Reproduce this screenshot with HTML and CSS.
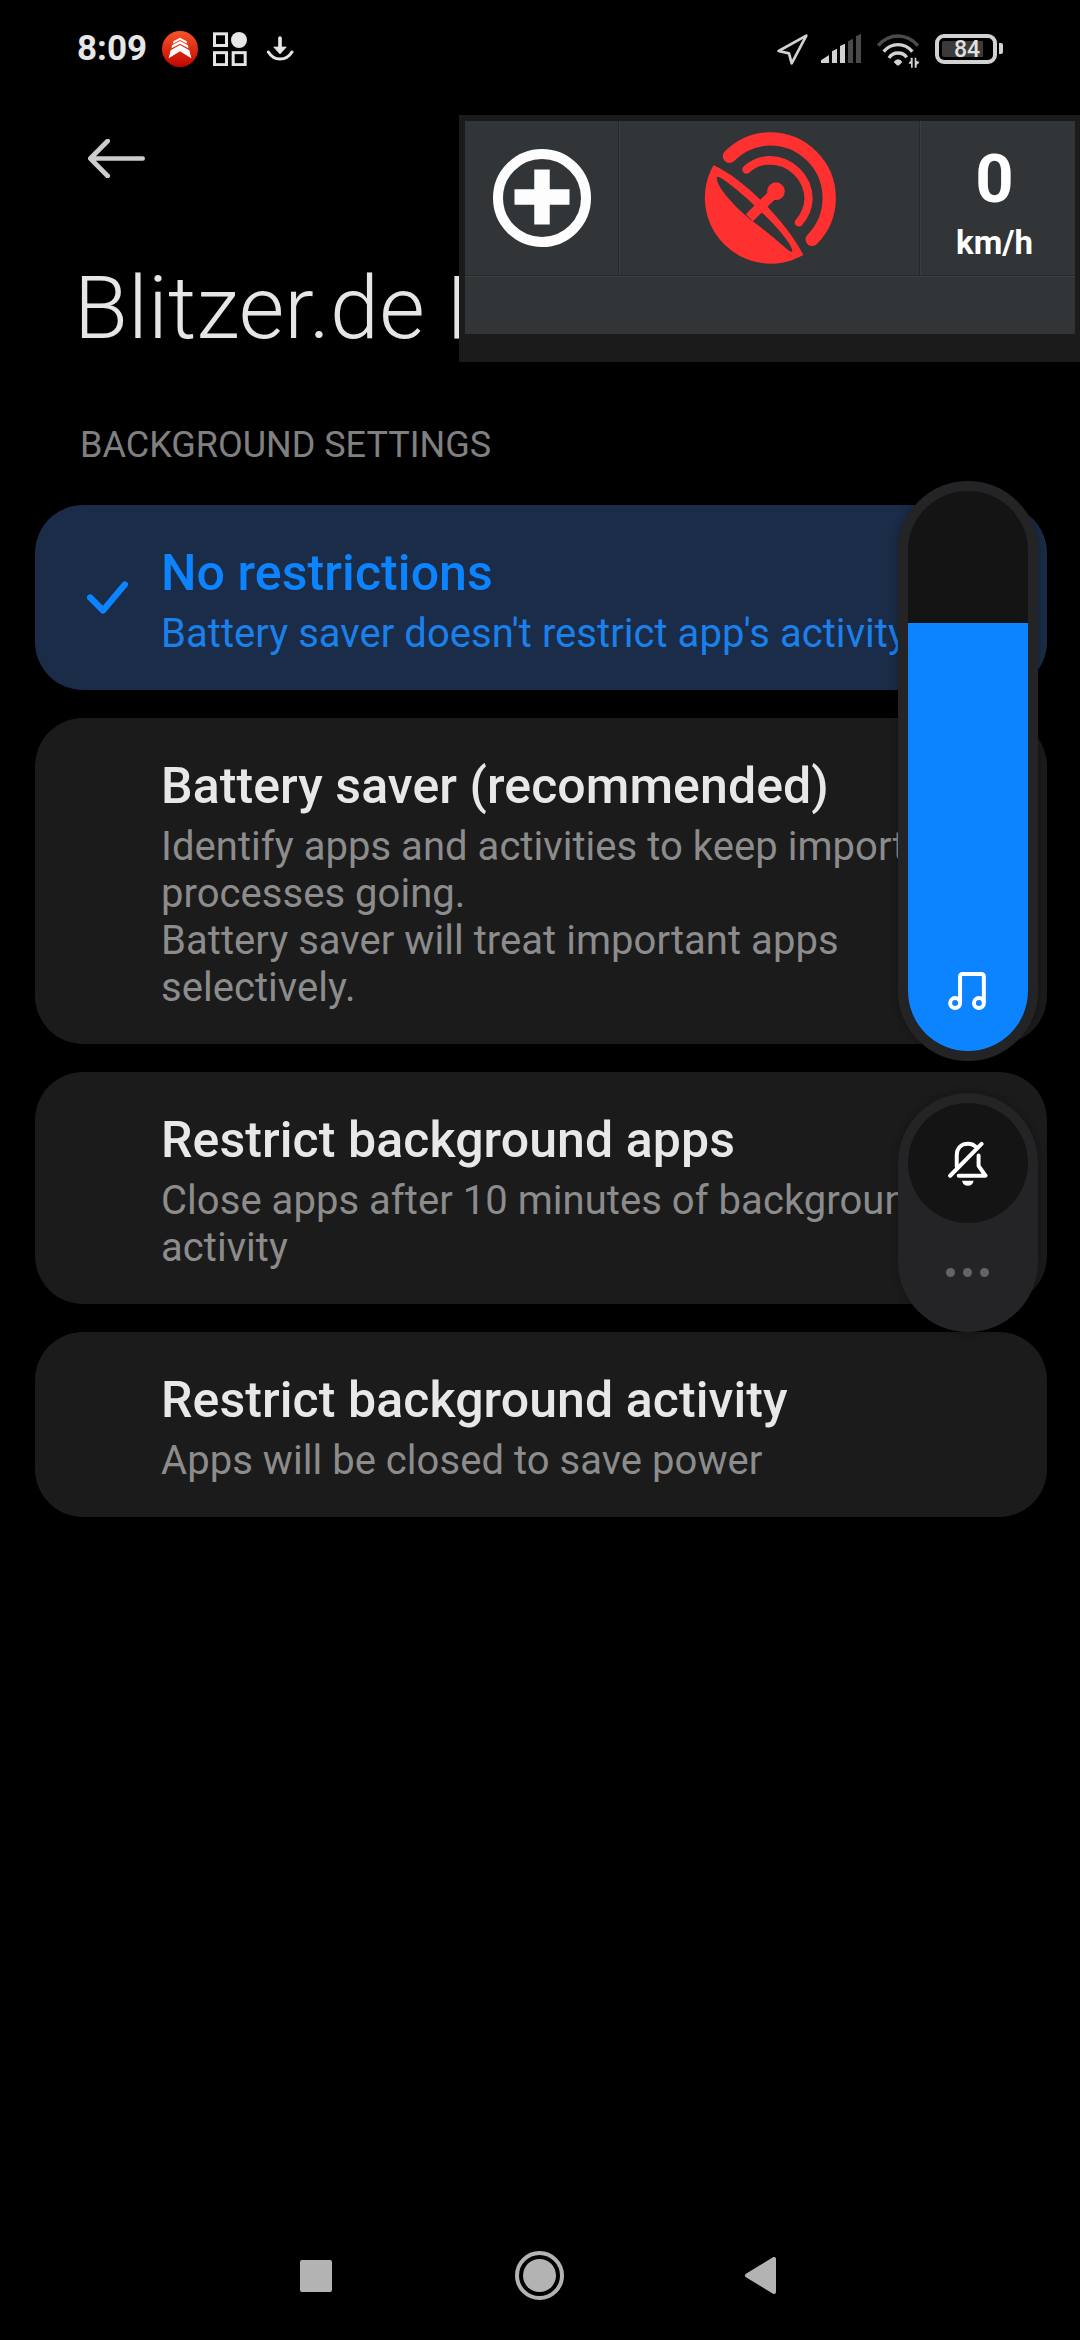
FILE: index.html
```html
<!DOCTYPE html>
<html lang="en">
<head>
<meta charset="utf-8">
<title>Battery saver</title>
<link rel="stylesheet" href="styles.css">
</head>
<body>
<div class="screen">
  <header class="status">
    <div class="status-left">
      <span class="clock">8:09</span>
      <svg class="ic-app" viewBox="306 59 108 108">
        <defs><linearGradient id="g" x1="0" y1="0" x2="0" y2="1"><stop offset="0" stop-color="#f8552a"/><stop offset="1" stop-color="#c00500"/></linearGradient></defs>
        <circle cx="360" cy="113" r="54" fill="url(#g)"/>
        <path fill="#fff" d="M340 90 360 79 380 90 381 97 360 86 339 97ZM336 102 360 89 384 102 385 111 360 97 335 111ZM332 117 360 101 388 117 394 141 360 120 326 141Z"/>
      </svg>
      <svg class="ic-grid" viewBox="459 63 102 102">
        <g fill="none" stroke="#e6e6e6" stroke-width="9"><rect x="463.500" y="68.500" width="36" height="35"/><rect x="463.500" y="125" width="36" height="36"/><rect x="519.500" y="125" width="36" height="36"/></g>
        <circle cx="537" cy="87" r="24" fill="#e6e6e6"/>
      </svg>
      <svg class="ic-down" viewBox="618 76 84 75">
        <path d="M625 124Q638 145 660 145Q683 145 696 124" fill="none" stroke="#e6e6e6" stroke-width="9" stroke-linecap="round"/>
        <path d="M660 82V114" stroke="#e6e6e6" stroke-width="11" stroke-linecap="round"/>
        <path d="M641 109H679L660 130Z" fill="#e6e6e6" stroke="#e6e6e6" stroke-width="2" stroke-linejoin="round"/>
      </svg>
    </div>
    <div class="status-right">
      <svg class="ic-nav" viewBox="51 72 93 93"><path d="M139 77 56 123 87 130 95 160Z" fill="none" stroke="#d2d2d2" stroke-width="8" stroke-linejoin="round"/></svg>
      <svg class="ic-signal" viewBox="183 72 120 87">
        <path fill="#d2d2d2" d="M183 159V151L207 135V159ZM216 159V124L231 116V159ZM240 159V108L255 101V159Z"/>
        <path fill="#4a4a4a" d="M264 159V94L279 86V159ZM288 159V79L303 71V159Z"/>
      </svg>
      <svg class="ic-wifi" viewBox="351 70 129 102">
        <g fill="none" stroke-width="10">
          <path stroke="#4a4a4a" d="M354 105Q380 76 414 76Q448 76 474 105"/>
          <path stroke="#d2d2d2" d="M371 123Q388 102 414 102Q440 102 457 123"/>
          <path stroke="#d2d2d2" d="M387 142Q396 127 414 127Q432 127 440 140"/>
        </g>
        <path fill="#d2d2d2" d="M401 154Q407 146 414 146Q422 146 427 154L418 163Q414 166 410 163Z"/>
        <path fill="#d2d2d2" d="M452 141H458V171H453V159H446Q446 155 452 151ZM464 141H469V151L478 153Q477 159 470 162V171H464Z"/>
      </svg>
      <div class="battery"><div class="battery-body"><span>84</span></div><i></i></div>
    </div>
  </header>

  <div class="appbar">
    <svg class="ic-back" viewBox="84 87 171 117"><path d="M143 93 91 145.500 143 198M91 145.500H248" fill="none" stroke="#ccc" stroke-width="14" stroke-linecap="round" stroke-linejoin="round"/></svg>
  </div>
  <h1 class="title">Blitzer.de PLUS</h1>
  <h2 class="section">BACKGROUND SETTINGS</h2>

  <main class="cards">
    <section class="card selected">
      <div class="mark"><svg class="ic-check" viewBox="201 272 123 101"><path d="M210.500 321 249 360 314.500 282" fill="none" stroke="#0d84ff" stroke-width="19" stroke-linecap="round" stroke-linejoin="round"/></svg></div>
      <div class="text"><h3>No restrictions</h3><p>Battery saver doesn't restrict app's activity</p></div>
    </section>
    <section class="card">
      <div class="mark"></div>
      <div class="text"><h3>Battery saver (recommended)</h3><p>Identify apps and activities to keep important<br>processes going.<br>Battery saver will treat important apps<br>selectively.</p></div>
    </section>
    <section class="card">
      <div class="mark"></div>
      <div class="text"><h3>Restrict background apps</h3><p>Close apps after 10 minutes of background<br>activity</p></div>
    </section>
    <section class="card">
      <div class="mark"></div>
      <div class="text"><h3>Restrict background activity</h3><p>Apps will be closed to save power</p></div>
    </section>
  </main>

  <nav class="navbar">
    <svg class="nav-recent" viewBox="0 0 32 32"><rect width="32" height="32" rx="2" fill="#b3b3b3"/></svg>
    <svg class="nav-home" viewBox="0 0 49 49"><circle cx="24.500" cy="24.500" r="22.500" fill="none" stroke="#b3b3b3" stroke-width="4"/><circle cx="24.500" cy="24.500" r="16.500" fill="#b3b3b3"/></svg>
    <svg class="nav-back" viewBox="0 0 31 37"><path d="M2 18.500 29 2V35Z" fill="#b3b3b3" stroke="#b3b3b3" stroke-width="4" stroke-linejoin="round"/></svg>
  </nav>

  <aside class="speed">
    <div class="speed-top">
      <div class="cell">
        <svg class="ic-plus" viewBox="0 0 98 98"><circle cx="49" cy="49" r="44" fill="none" stroke="#fdfdfd" stroke-width="10"/><path d="M49 20.500V75.500M21.500 48H76.500" stroke="#fdfdfd" stroke-width="15.500"/></svg>
      </div>
      <div class="cell">
        <svg class="ic-dish" viewBox="69 95 396 397">
          <path fill="none" stroke="#ff3030" stroke-width="40" stroke-linecap="round" d="M145 168A177 177 0 0 1 267 115.500A178 178 0 0 1 445 293A177 177 0 0 1 394 418"/>
          <path fill="none" stroke="#ff3030" stroke-width="25" stroke-linecap="round" d="M196 208A110 110 0 0 1 265 180A118 118 0 0 1 383 298A116 116 0 0 1 354 367"/>
          <path fill="#ff3030" fill-rule="evenodd" d="M97 195C185 233 318 365 367 465A198 198 0 0 1 97 195ZM108 230C98 250 160 325 229 374C290 420 328 460 333 455C343 445 285 375 243 338C180 275 116 226 108 230Z"/>
          <path d="M205 353 285 273" stroke="#ff3030" stroke-width="30"/>
          <circle cx="285" cy="273" r="26.500" fill="#ff3030"/>
        </svg>
      </div>
      <div class="cell readout"><b>0</b><span>km/h</span></div>
    </div>
    <div class="speed-bottom"></div>
  </aside>

  <aside class="volume">
    <div class="slider"><div class="level" style="height:428px">
      <svg class="ic-music" viewBox="264 155 114 115"><g fill="none" stroke="#fff" stroke-width="12"><path d="M300 249V169Q300 161 308 161H364Q372 161 372 169V249"/><circle cx="285" cy="249" r="15"/><circle cx="357" cy="249" r="15"/></g></svg>
    </div></div>
    <div class="modes">
      <div class="mute">
        <svg class="ic-bell" viewBox="262 660 120 136">
          <g fill="none" stroke="#fff" stroke-width="12" stroke-linecap="round" stroke-linejoin="round"><path d="M268 765 363 669"/><path d="M288 738V703C288 680 303 668 322 668C333 668 341 672 347 679"/><path d="M354 704V735L375 765H294"/></g>
          <path fill="#fff" d="M304 780H339Q336 795 321.500 795Q307 795 304 780Z"/>
        </svg>
      </div>
      <div class="dots"><i></i><i></i><i></i></div>
    </div>
  </aside>
</div>
</body>
</html>
```
FILE: styles.css
```css
* { box-sizing: border-box; margin: 0; padding: 0; }
body { background: #000; font-family: Roboto, "Noto Sans", sans-serif; }
svg { display: block; flex: none; }

.screen {
  position: relative;
  width: 1080px;
  height: 2340px;
  overflow: hidden;
  background: #000;
  display: flex;
  flex-direction: column;
}

/* status bar */
.status { height: 97px; padding: 0 77px 0 77px; display: flex; justify-content: space-between; align-items: center; }
.status-left, .status-right { display: flex; align-items: center; }
.clock { width: 69px; font-size: 35px; font-weight: 700; line-height: 40px; color: #e6e6e6; white-space: nowrap; }
.ic-app { width: 36px; height: 36px; margin-left: 16px; }
.ic-grid { width: 34px; height: 34px; margin-left: 15px; }
.ic-down { width: 28px; height: 25px; margin-left: 19px; }
.ic-nav { width: 31px; height: 31px; margin-top: 2px; }
.ic-signal { width: 40px; height: 29px; margin-left: 13px; }
.ic-wifi { width: 43px; height: 34px; margin: 4px 0 0 16px; }
.battery { display: flex; align-items: center; margin-left: 15px; gap: 2px; }
.battery-body {
  width: 62px; height: 30px; border: 4px solid #d2d2d2; border-radius: 9px;
  background: #3a3a3a; background-clip: content-box; padding: 3px 10px 3px 3px;
}
.battery-body span { display: block; margin-left: 12px; color: #e0e0e0; font-size: 23px; font-weight: 500; line-height: 17px; }
.battery i { width: 4px; height: 11px; border-radius: 0 2px 2px 0; background: #d2d2d2; }

/* heading */
.appbar { height: 123px; padding: 0 88px; display: flex; align-items: center; }
.ic-back { width: 57px; height: 39px; }
.title { margin-top: 36px; padding-left: 74px; font-size: 88px; font-weight: 300; line-height: 104px; letter-spacing: .15px; color: #e6e6e6; white-space: nowrap; }
.section { margin-top: 64px; padding-left: 80px; font-size: 36px; font-weight: 400; line-height: 42px; color: #808080; }

/* options */
.cards { margin-top: 39px; padding: 0 33px 0 35px; display: flex; flex-direction: column; gap: 28px; }
.card { display: grid; grid-template-columns: 126px 1fr; padding: 33px 0; border-radius: 48px; background: #1b1b1b; white-space: nowrap; }
.mark { display: flex; align-items: center; padding-left: 52px; }
.ic-check { width: 41px; height: 34px; }
.card h3 { padding-top: 1px; margin-bottom: 2px; font-size: 50px; font-weight: 500; line-height: 69px; letter-spacing: .09px; color: #e8e8e8; }
.card p { font-size: 40px; line-height: 47px; letter-spacing: .04px; color: #8c8c8c; }
.card.selected { background: #1a2c47; }
.card.selected h3 { color: #0d84ff; }
.card.selected p { color: #1a80ec; }

/* system navigation */
.navbar { margin-top: auto; height: 129px; padding: 0 304px 0 300px; display: flex; justify-content: space-between; align-items: center; }
.nav-recent { width: 32px; height: 32px; }
.nav-home { width: 49px; height: 49px; margin-left: 2px; }
.nav-back { width: 31px; height: 37px; }

/* floating speed window */
.speed { position: absolute; left: 459px; top: 115px; width: 621px; height: 247px; padding: 6px 5px 28px 6px; background: #1b1b1b; display: flex; flex-direction: column; }
.speed-top { height: 155px; display: grid; grid-template-columns: 154px 301px 1fr; background: #323537; border-bottom: 1px solid #26292a; }
.cell { display: flex; align-items: center; justify-content: center; border-right: 1px solid #26292a; }
.cell + .cell { border-left: 1px solid #3a3e40; }
.cell:last-child { border-right: 0; }
.ic-plus { width: 98px; height: 98px; }
.ic-dish { width: 132px; height: 132px; }
.readout { flex-direction: column; justify-content: flex-start; padding: 19px 7px 0 0; color: #fff; }
.readout b { font-size: 67px; line-height: 78px; }
.readout span { margin-top: 5px; font-size: 33px; font-weight: 700; line-height: 40px; }
.speed-bottom { height: 58px; background: #323537; border-top: 1px solid #3c4042; }

/* volume panel */
.volume { position: absolute; left: 898px; top: 481px; width: 140px; display: flex; flex-direction: column; gap: 32px; }
.slider { height: 580px; border: 10px solid #242426; border-radius: 70px; background: #141414; display: flex; align-items: flex-end; overflow: hidden; box-shadow: 0 0 10px rgba(0,0,0,.3); }
.level { width: 120px; background: #0d84ff; display: flex; align-items: flex-end; justify-content: center; padding-bottom: 41px; }
.ic-music { width: 38px; height: 38px; margin-right: 2px; }
.modes { height: 239px; padding-top: 10px; border-radius: 70px; background: #242426; display: flex; flex-direction: column; align-items: center; box-shadow: 0 0 10px rgba(0,0,0,.3); }
.mute { width: 120px; height: 120px; border-radius: 50%; background: #141414; display: flex; align-items: center; justify-content: center; }
.ic-bell { width: 40px; height: 45px; margin-right: 1px; }
.dots { display: flex; gap: 8px; margin: 45px 1px 0 0; }
.dots i { width: 9px; height: 9px; border-radius: 50%; background: #646465; }
```
